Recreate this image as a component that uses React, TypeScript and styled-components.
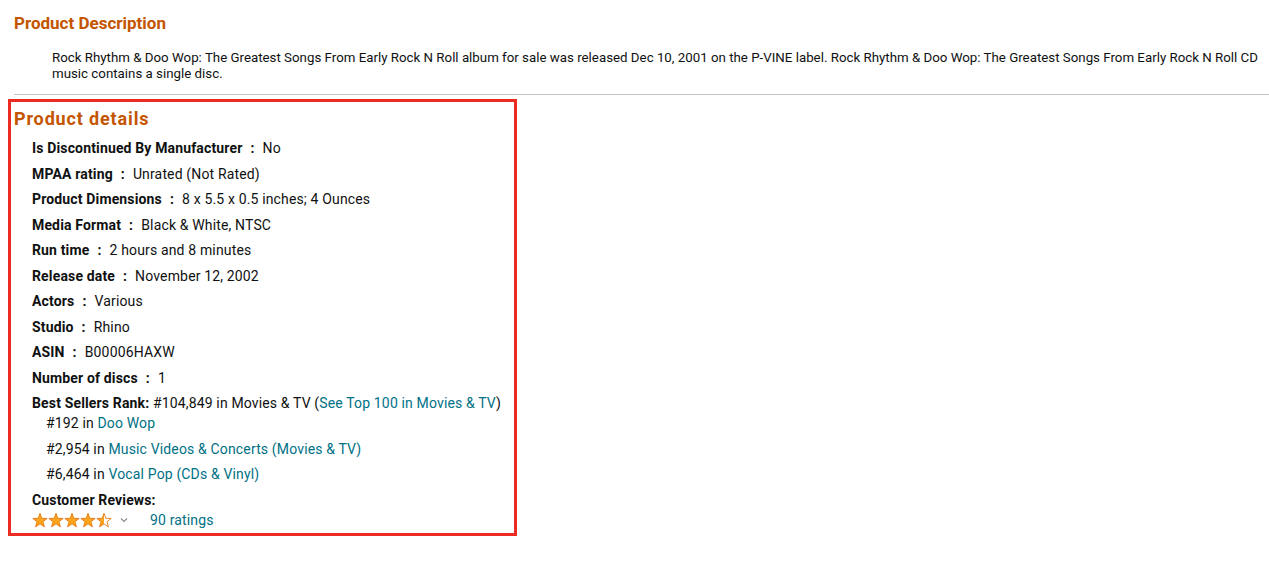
import React from "react";
import styled, { createGlobalStyle } from "styled-components";

const Global = createGlobalStyle`
  html, body { margin: 0; padding: 0; background: #fff; }
  body { font-family: Roboto, "Liberation Sans", Arial, sans-serif; color: #0f1111; }
`;

const Page = styled.div`
  padding: 11px 0 0 14px;
  width: 1255px;
`;

const SectionTitle = styled.h2<{ $size?: number; $spacing?: number }>`
  margin: 0;
  font-size: ${(p) => p.$size ?? 17}px;
  letter-spacing: ${(p) => p.$spacing ?? 0}px;
  line-height: 24px;
  font-weight: 700;
  color: #c45500;
`;

const Description = styled.p`
  margin: 15px 0 0 38px;
  font-size: 13.3px;
  line-height: 16px;
  color: #0f1111;
`;

const Divider = styled.hr`
  margin: 12px 0 0 0;
  border: 0;
  border-top: 1px solid #c4c4c4;
  height: 0;
`;

const DetailsBox = styled.section`
  margin: 4px 0 0 -6px;
  width: 500px;
  border: 3px solid #ec2c22;
  padding: 5px 0 3px 3px;
`;

const DetailList = styled.ul`
  list-style: none;
  margin: 7px 0 0 0;
  padding: 0 0 0 18px;
`;

const Item = styled.li`
  font-size: 14px;
  line-height: 20px;
  letter-spacing: 0.15px;
  margin-bottom: 5.5px;
  &:last-child { margin-bottom: 0; }
`;

const Label = styled.span`
  font-weight: 700;
`;

const Colon = styled.span`
  font-weight: 700;
  margin: 0 8px 0 8px;
`;

const Link = styled.a`
  color: #007185;
  text-decoration: none;
`;

const SubList = styled.ul`
  list-style: none;
  margin: 0;
  padding: 0 0 0 14px;
`;

const SubItem = styled.li`
  font-size: 14px;
  line-height: 20px;
  margin-bottom: 5.5px;
  &:last-child { margin-bottom: 0; }
`;

const RatingRow = styled.div`
  display: flex;
  align-items: center;
  height: 20px;
`;

const Chevron = styled.span`
  display: inline-flex;
  margin: 0 22px 0 7px;
`;

const STAR =
  "8,0.8 9.82,5.79 15.13,5.98 10.95,9.26 12.41,14.37 8,11.4 3.59,14.37 5.05,9.26 0.87,5.98 6.18,5.79";

const Stars: React.FC<{ value: number }> = ({ value }) => (
  <svg width="81" height="16" viewBox="0 0 81 16">
    <defs>
      <linearGradient id="half" x1="0" x2="1" y1="0" y2="0">
        <stop offset="50%" stopColor="#ffa41c" />
        <stop offset="50%" stopColor="#fff" />
      </linearGradient>
    </defs>
    {[0, 1, 2, 3, 4].map((i) => {
      const fill = value >= i + 1 ? "#ffa41c" : value > i ? "url(#half)" : "#fff";
      return (
        <polygon
          key={i}
          points={STAR}
          transform={`translate(${i * 16},0.5)`}
          fill={fill}
          stroke="#e47911"
          strokeWidth="0.9"
          strokeLinejoin="round"
        />
      );
    })}
  </svg>
);

const details: [string, string][] = [
  ["Is Discontinued By Manufacturer", "No"],
  ["MPAA rating", "Unrated (Not Rated)"],
  ["Product Dimensions", "8 x 5.5 x 0.5 inches; 4 Ounces"],
  ["Media Format", "Black & White, NTSC"],
  ["Run time", "2 hours and 8 minutes"],
  ["Release date", "November 12, 2002"],
  ["Actors", "Various"],
  ["Studio", "Rhino"],
  ["ASIN", "B00006HAXW"],
  ["Number of discs", "1"],
];

export default function App() {
  return (
    <>
      <Global />
      <Page>
        <SectionTitle>Product Description</SectionTitle>
        <Description>
          Rock Rhythm &amp; Doo Wop: The Greatest Songs From Early Rock N Roll album for sale was released Dec 10, 2001 on the P-VINE label. Rock Rhythm &amp; Doo Wop: The Greatest Songs From Early Rock N Roll CD music contains a single disc.
        </Description>
        <Divider />
        <DetailsBox>
          <SectionTitle $size={18} $spacing={0.85}>Product details</SectionTitle>
          <DetailList>
            {details.map(([k, v]) => (
              <Item key={k}>
                <Label>{k}</Label>
                <Colon>:</Colon>
                <span>{v}</span>
              </Item>
            ))}
            <Item>
              <Label>Best Sellers Rank:</Label> #104,849 in Movies &amp; TV (
              <Link href="#">See Top 100 in Movies &amp; TV</Link>)
              <SubList>
                <SubItem>
                  #192 in <Link href="#">Doo Wop</Link>
                </SubItem>
                <SubItem>
                  #2,954 in <Link href="#">Music Videos &amp; Concerts (Movies &amp; TV)</Link>
                </SubItem>
                <SubItem>
                  #6,464 in <Link href="#">Vocal Pop (CDs &amp; Vinyl)</Link>
                </SubItem>
              </SubList>
            </Item>
            <Item>
              <Label>Customer Reviews:</Label>
              <RatingRow>
                <Stars value={4.5} />
                <Chevron>
                  <svg width="8" height="6" viewBox="0 0 8 6">
                    <path d="M1 1.5 L4 4.5 L7 1.5" fill="none" stroke="#888" strokeWidth="1.1" />
                  </svg>
                </Chevron>
                <Link href="#">90 ratings</Link>
              </RatingRow>
            </Item>
          </DetailList>
        </DetailsBox>
      </Page>
    </>
  );
}
